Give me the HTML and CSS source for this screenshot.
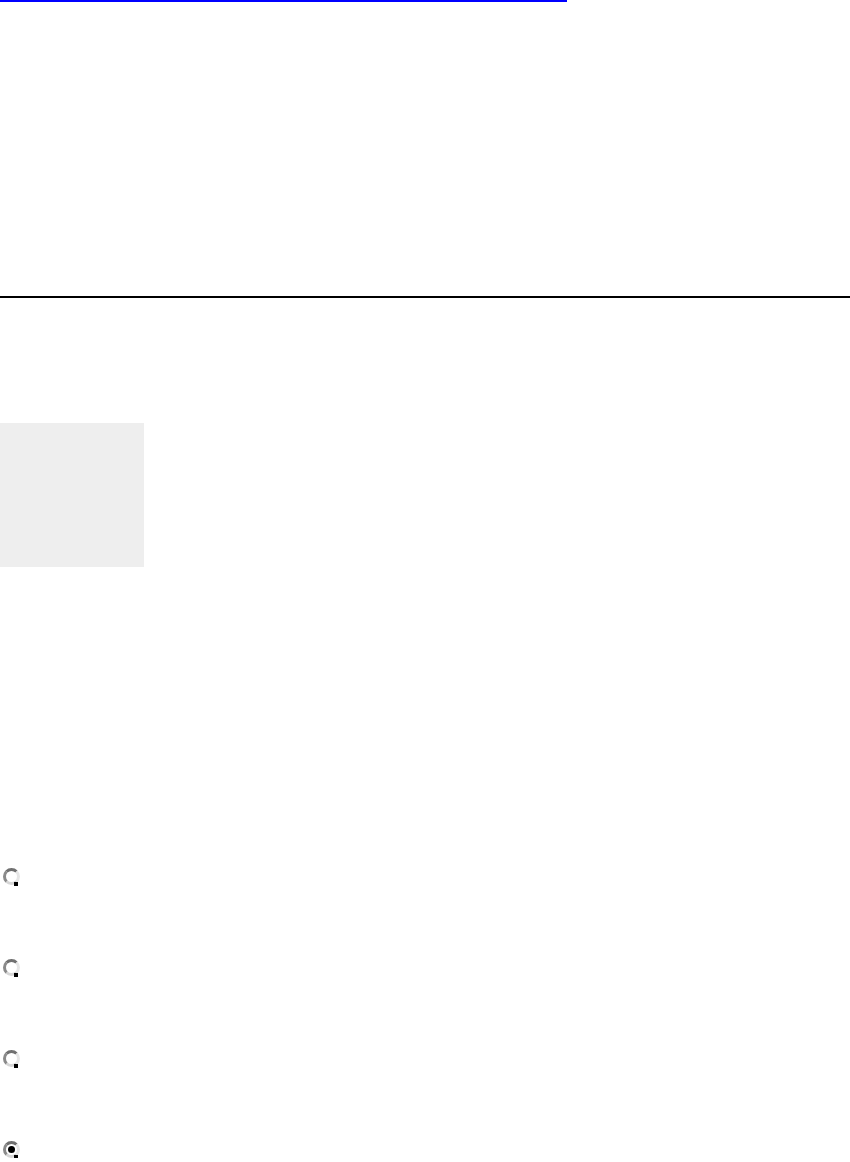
FILE: index.html
```html
<!DOCTYPE html>
<html>
<head>
<meta charset="utf-8">
<link rel="stylesheet" href="styles.css">
</head>
<body>
<div class="page">
  <a class="toplink" href="#"></a>
  <div class="rule"></div>
  <div class="box"></div>
  <div class="radios">
    <span class="radio"></span>
    <span class="radio"></span>
    <span class="radio"></span>
    <span class="radio checked"></span>
  </div>
</div>
</body>
</html>
```
FILE: styles.css
```css
html, body {
  margin: 0;
  padding: 0;
  background: #fff;
  font-family: "Liberation Sans", Arial, sans-serif;
}
.page {
  display: flex;
  flex-direction: column;
  align-items: flex-start;
}
.toplink {
  display: block;
  width: 567px;
  height: 2px;
  background: #0000ff;
}
.rule {
  align-self: stretch;
  height: 2px;
  margin-top: 294px;
  background: #000;
}
.box {
  width: 144px;
  height: 144px;
  margin-top: 125px;
  background: #eeeeee;
}
.radios {
  display: flex;
  flex-direction: column;
  gap: 74px;
  margin-top: 301px;
  padding-left: 3px;
}
.radio {
  position: relative;
  display: block;
  width: 11px;
  height: 11px;
  border-radius: 50%;
  border: 3px solid #a0a0a0;
  border-left-color: #8a8a8a;
  border-top-color: #707070;
  border-right-color: #e6e6e6;
  border-bottom-color: #d6d6d6;
  background: #fff;
}
.radio::after {
  content: "";
  position: absolute;
  right: -1px;
  bottom: -4px;
  width: 4px;
  height: 4px;
  background: #000;
}
.radio.checked::before {
  content: "";
  position: absolute;
  left: 2px;
  top: 2px;
  width: 7px;
  height: 7px;
  border-radius: 50%;
  background: #000;
}
```
